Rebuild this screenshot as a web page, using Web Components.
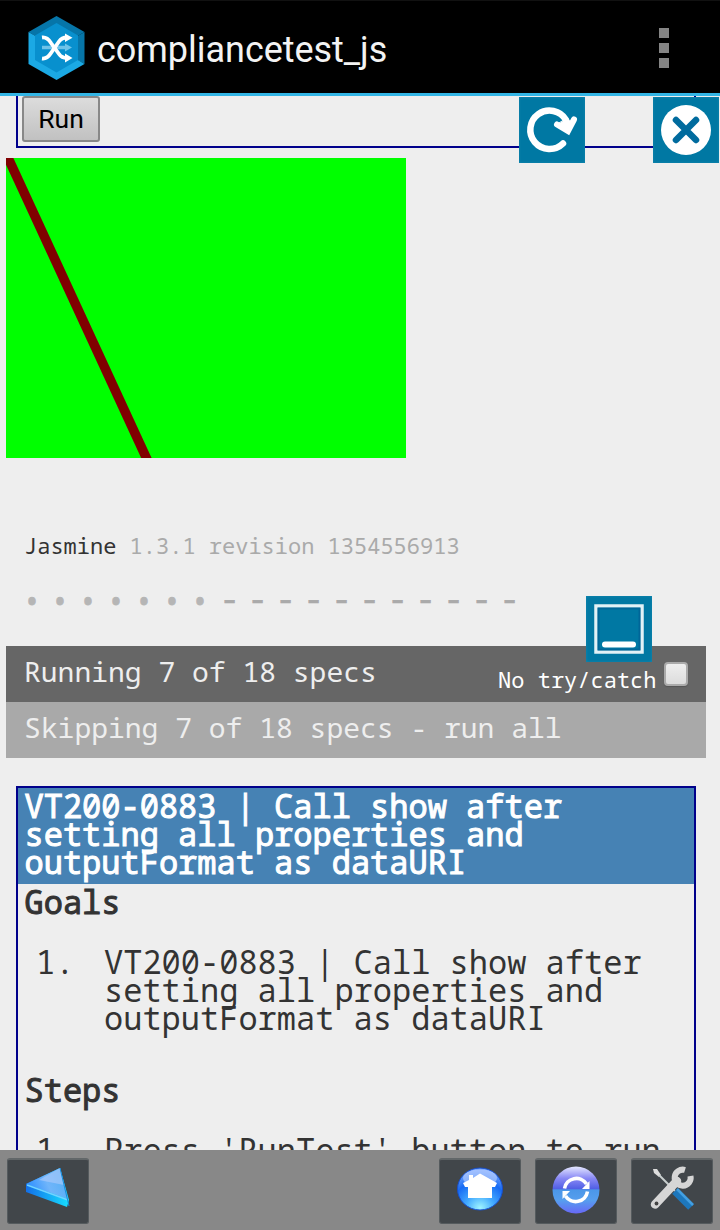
<!DOCTYPE html>
<html lang="en">
<head>
<meta charset="utf-8">
<title>compliancetest_js</title>
<style>
html,body{margin:0;height:1230px;overflow:hidden;background:#eee}
</style>
</head>
<body>
<test-app></test-app>
<script>
const define = (name, html) => customElements.define(name, class extends HTMLElement {
  constructor() {
    super();
    const t = document.createElement('template');
    t.innerHTML = html;
    this.attachShadow({ mode: 'open' }).appendChild(t.content.cloneNode(true));
  }
});

define('action-bar', `
<style>
:host{display:flex;align-items:center;box-sizing:border-box;height:96px;background:#000;border-top:1px solid #111;border-bottom:3px solid #33b5e5;padding:0 51px 0 28px;color:#f3f3f3;font-family:Roboto,sans-serif}
.logo{width:57px;height:65px;flex:none;margin-top:2px}
h1{font-size:36px;font-weight:400;margin:6px 0 0 12px;flex:1;line-height:44px;white-space:nowrap;letter-spacing:-.03px}
.more{display:grid;gap:5px;margin-top:2px}
.more i{width:10px;height:10px;background:#858585}
</style>
<svg class="logo" viewBox="0 0 57 65">
<path d="M28.500 0 56.500 16 28.500 32.500 .5 16z" fill="#0675a8"/>
<path d="M56.500 16V48L28.500 32z" fill="#0675a8"/>
<path d="M.5 16V48L28.500 64 56.500 48 50 44 28.500 32z" fill="#1ba9e4"/>
<path d="M28.500 7 50 19.500V44L28.500 56.500 7 44V19.500z" fill="#0890ce"/>
<path d="M14 31.500H38" stroke="#6fc3e8" stroke-width="3.500"/><path d="M37 27.500 44 31.500 37 35.500z" fill="#6fc3e8"/>
<g fill="none" stroke="#fff" stroke-width="3.800"><path d="M14 21.500C18 21 20.500 23 23 27L31 38C33 41 35.500 42 39 42"/><path d="M14 42.500C18 43 20.500 41 23 37L31 25.500C33 22.500 35.500 21.500 39 21.500"/></g>
<path d="M37 17.500 44.500 21.700 37 26zM37 37.500 44.500 42 37 46.500z" fill="#fff"/>
</svg>
<h1><slot></slot></h1>
<div class="more"><i></i><i></i><i></i></div>`);

define('run-panel', `
<style>
:host{display:block;box-sizing:border-box;width:680px;height:52px;margin-left:16px;border:solid #00008b;border-width:0 2px 2px;padding-left:4px}
button{display:block;box-sizing:border-box;width:78px;height:46px;padding:0 0 1px;border:2px solid #888;border-radius:3px;background:linear-gradient(#dcdcdc,#c1c1c1);font:26.5px/40px Roboto,sans-serif;color:#000}
</style>
<button><slot></slot></button>`);

define('line-canvas', `
<style>:host{display:block;width:400px;height:300px;margin:10px 0 0 6px}svg{display:block}</style>
<svg width="400" height="300"><rect width="400" height="300" fill="#0f0"/><path d="M-2 -9 145 310" stroke="#800000" stroke-width="9.500"/></svg>`);

define('jasmine-banner', `
<style>
:host{display:block;margin:74px 0 0 24px;font-size:22px;line-height:26px;color:#333}
span{color:#aaa}
</style>
<slot></slot> <span><slot name="version"></slot></span>`);

define('spec-symbols', `
<style>
:host{display:flex;height:28px;margin:30px 0 0 18px;color:#aaa}
span{width:28px;text-align:center;line-height:28px}
.p{font-size:30px;color:#b5b5b5;line-height:27px;-webkit-text-stroke:.8px #b5b5b5}
.s{box-sizing:border-box;padding-left:3px;font-size:32px;line-height:22px;-webkit-text-stroke:.7px #aaa}
</style>${'<span class="p">•</span>'.repeat(7)}${'<span class="s">-</span>'.repeat(11)}`);

define('status-bar', `
<style>
:host{display:flex;box-sizing:border-box;width:700px;height:56px;margin-left:6px;padding:9px 18px 0 18px;background:#666;color:#eee;font-size:28px;line-height:32px;white-space:pre}
:host([skipped]){background:#a9a9a9}
div{flex:1}
</style><div><slot></slot></div><slot name="option"></slot>`);

define('try-option', `
<style>
:host{display:flex;font-size:22px;line-height:26px;color:#fff;padding-top:11px}
i{box-sizing:border-box;width:24px;height:24px;margin:-4px 0 0 7.500px;border:2px solid #aaa;border-radius:4px;background:linear-gradient(#eee,#dcdcdc);box-shadow:0 1px 1px #555}
</style><slot></slot><i></i>`);

define('spec-card', `
<style>
:host{display:block;box-sizing:border-box;width:680px;height:500px;margin:28px 0 0 16px;border:2px solid #00008b}
header{box-sizing:border-box;height:96px;padding:4px 6.500px 8px;background:#4682b4;color:#fff;-webkit-text-stroke:1px #fff}
main{padding:4px 6.500px}
</style><header><slot name="title"></slot></header><main><slot></slot></main>`);

define('spec-section', `
<style>
:host{display:block;height:188px}
h2{font:inherit;margin:0;-webkit-text-stroke:1px #333}
div{display:grid;grid-template-columns:68px 1fr;margin:32px 0 0 11.500px}
</style><h2><slot name="heading"></slot></h2><div><span>1.</span><span><slot></slot></span></div>`);

define('float-tile', `
<style>
:host{position:absolute;width:66px;height:66px;background:#0078a3;box-shadow:inset 0 0 3px #1689b0}
</style><slot></slot>`);

define('bottom-bar', `
<style>
:host{display:flex;gap:14px;box-sizing:border-box;height:80px;padding:8px 7px;background:#888}
b{box-sizing:border-box;width:82px;height:66px;background:#41464a;border:1px solid #555b5e;border-top:2px solid #626769;border-radius:3px}
b:first-of-type{margin-right:auto}
svg{display:block;width:80px;height:63px}
</style>
<b><svg viewBox="8 1160 80 63"><defs><linearGradient id="a" x1="0" y1=".6" x2="1" y2=".3"><stop stop-color="#278cff"/><stop offset=".5" stop-color="#70b5fa"/><stop offset="1" stop-color="#53aef4"/></linearGradient><linearGradient id="b"><stop stop-color="#146fe8"/><stop offset="1" stop-color="#16dfff"/></linearGradient></defs>
<path d="M26 1184 60 1168 69 1200 67 1207 26 1192z" fill="url(#b)"/><path d="M26 1184 60 1168 68 1199z" fill="url(#a)"/><path d="M39 1180 60 1168 64 1185z" fill="#b6cefb" opacity=".55"/><path d="M27 1185 68 1200" stroke="#71d3ff" stroke-width="1.500"/><path d="M60 1168 69 1206" stroke="#168bdc"/></svg></b>
<b><svg viewBox="440 1160 80 63"><defs><radialGradient id="h" cx=".5" cy=".95" r=".9"><stop stop-color="#9ff5ff"/><stop offset=".35" stop-color="#43aaff"/><stop offset=".7" stop-color="#176bf4"/><stop offset="1" stop-color="#74a5ff"/></radialGradient></defs>
<ellipse cx="480" cy="1189" rx="22.500" ry="21" fill="url(#h)" stroke="#164fd0"/><ellipse cx="480" cy="1178" rx="17" ry="8.500" fill="#bacfff" opacity=".65"/><path d="M480 1173.500 497 1183 495 1187H492V1198H468V1187H465L463 1183 469 1180V1175H473V1178z" fill="#fff"/></svg></b>
<b><svg viewBox="536 1160 80 63"><defs><linearGradient id="r" x2="0" y2="1"><stop stop-color="#e4e7ff"/><stop offset=".25" stop-color="#8989f5"/><stop offset=".47" stop-color="#5260e5"/><stop offset=".5" stop-color="#4b97e8"/><stop offset=".72" stop-color="#569eee"/><stop offset="1" stop-color="#6868f7"/></linearGradient></defs>
<circle cx="576" cy="1190" r="23.500" fill="url(#r)"/><g fill="none" stroke="#fff" stroke-width="3.600"><path d="M564.500 1188.500A12 12 0 0 1 586.500 1184"/><path d="M587.500 1191.500A12 12 0 0 1 565.500 1196"/></g><path d="M589.500 1181V1189H582zM562.500 1199V1191H570z" fill="#fff"/></svg></b>
<b><svg viewBox="632 1160 80 63"><path d="M653 1169 657 1169 661 1175 659 1177 654 1173z" fill="#ddd"/><path d="M659 1175 675 1191" stroke="#c9cfcf" stroke-width="2"/><path d="M675 1191 691 1207" stroke="#1d77bc" stroke-width="8"/><path d="M677 1189 693 1205" stroke="#439fe1" stroke-width="2.500"/>
<path d="M655 1204.500 677 1181" stroke="#d6d6d6" stroke-width="8.500" stroke-linecap="round"/><path d="M685 1170A8 8 0 1 0 690.500 1176" fill="none" stroke="#d6d6d6" stroke-width="6"/><circle cx="656.500" cy="1203.500" r="1.900" fill="#444"/></svg></b>`);

define('test-app', `
<style>
:host{display:flex;flex-direction:column;position:relative;width:720px;height:1230px;background:#eee;color:#333;font:32px/28px "Droid Sans Mono","Noto Sans Mono","DejaVu Sans Mono",monospace}
.page{flex:1;min-height:0;overflow:hidden}
.bars{margin-top:30px}
.reload{left:519px;top:97px}.close{left:653px;top:97px}.restore{left:586px;top:596px}
svg{display:block}
</style>
<action-bar>compliancetest_js</action-bar>
<section class="page">
<run-panel>Run</run-panel>
<line-canvas></line-canvas>
<jasmine-banner>Jasmine<span slot="version">1.3.1 revision 1354556913</span></jasmine-banner>
<spec-symbols></spec-symbols>
<div class="bars">
<status-bar>Running 7 of 18 specs<try-option slot="option">No try/catch</try-option></status-bar>
<status-bar skipped>Skipping 7 of 18 specs - run all</status-bar>
</div>
<spec-card><span slot="title">VT200-0883 | Call show after<br>setting all properties and<br>outputFormat as dataURI</span>
<spec-section><span slot="heading">Goals</span>VT200-0883 | Call show after<br>setting all properties and<br>outputFormat as dataURI</spec-section>
<spec-section><span slot="heading">Steps</span>Press 'RunTest' button to run</spec-section>
</spec-card>
</section>
<bottom-bar></bottom-bar>
<float-tile class="reload"><svg width="66" height="66" fill="none" stroke="#fff" stroke-width="6.500" stroke-linecap="round"><path d="M44 46.500A19.200 19.200 0 1 1 47 23"/><path d="M38 27.500 49 34 55 22.500" stroke-width="6"/><path d="M39 27 49.500 34 53 25 47 22z" fill="#fff" stroke-width="1"/></svg></float-tile>
<float-tile class="close"><svg width="66" height="66"><circle cx="33" cy="33" r="25" fill="#fff"/><path d="M23 23 43 43M43 23 23 43" stroke="#006b9e" stroke-width="6.500" stroke-linecap="round"/></svg></float-tile>
<float-tile class="restore"><svg width="66" height="66"><rect x="10" y="10" width="46" height="46" fill="#0078a3" stroke="#e1f1f6" stroke-width="3.500"/><rect x="12.500" y="12.500" width="41" height="41" fill="none" stroke="#006698" stroke-width="2"/><path d="M19 48.500H47" stroke="#fff" stroke-width="6" stroke-linecap="round"/></svg></float-tile>`);
</script>
</body>
</html>
